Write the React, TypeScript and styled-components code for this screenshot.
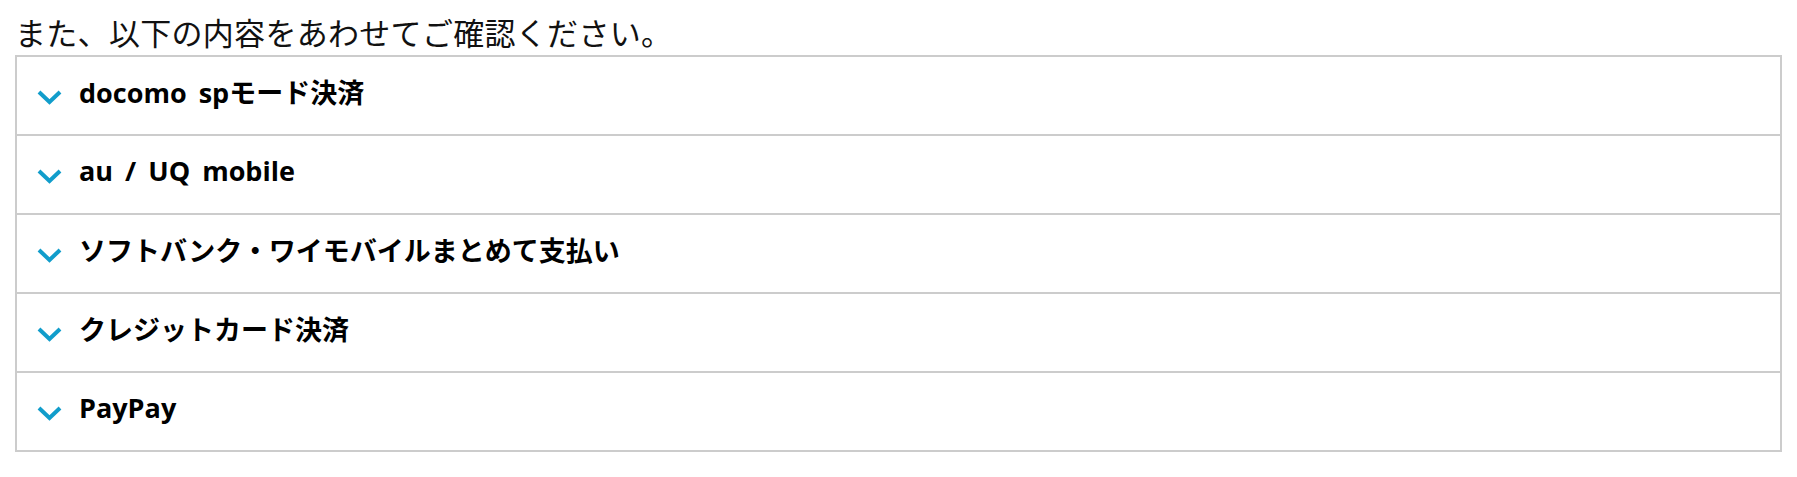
import React from "react";
import styled, { createGlobalStyle } from "styled-components";

const GlobalStyle = createGlobalStyle`
  html, body {
    margin: 0;
    padding: 0;
    background: #ffffff;
  }
  body {
    font-family: "Noto Sans CJK JP", "Noto Sans", sans-serif;
    color: #111111;
  }
`;

const Page = styled.div`
  padding: 9px 15px 0;
`;

const Lead = styled.p`
  margin: 0;
  font-size: 31px;
  line-height: 46px;
  font-weight: 400;
  letter-spacing: 0.3px;
`;

const Accordion = styled.div`
  border: 2px solid #cccccc;
`;

const Row = styled.div`
  display: flex;
  align-items: center;
  height: 77px;
  padding-left: 20px;
  border-bottom: 2px solid #cccccc;
  cursor: pointer;

  &:last-child {
    border-bottom: none;
  }
`;

const Chevron = styled.svg`
  flex: none;
  width: 25px;
  height: 15px;
  margin-top: 4px;
  margin-right: 17px;
`;

const Title = styled.span`
  margin-bottom: 8px;
  font-family: "Open Sans", "Noto Sans CJK JP", sans-serif;
  font-size: 27px;
  font-weight: 700;
  word-spacing: 5px;
  color: #000000;
`;

const items = [
  "docomo spモード決済",
  "au / UQ mobile",
  "ソフトバンク・ワイモバイルまとめて支払い",
  "クレジットカード決済",
  "PayPay",
];

function App() {
  return (
    <Page>
      <GlobalStyle />
      <Lead>また、以下の内容をあわせてご確認ください。</Lead>
      <Accordion>
        {items.map((label) => (
          <Row key={label}>
            <Chevron viewBox="0 0 25 15">
              <polyline
                points="2,2 12.5,12 23,2"
                fill="none"
                stroke="#119dcb"
                strokeWidth="4"
              />
            </Chevron>
            <Title>{label}</Title>
          </Row>
        ))}
      </Accordion>
    </Page>
  );
}

export default App;
